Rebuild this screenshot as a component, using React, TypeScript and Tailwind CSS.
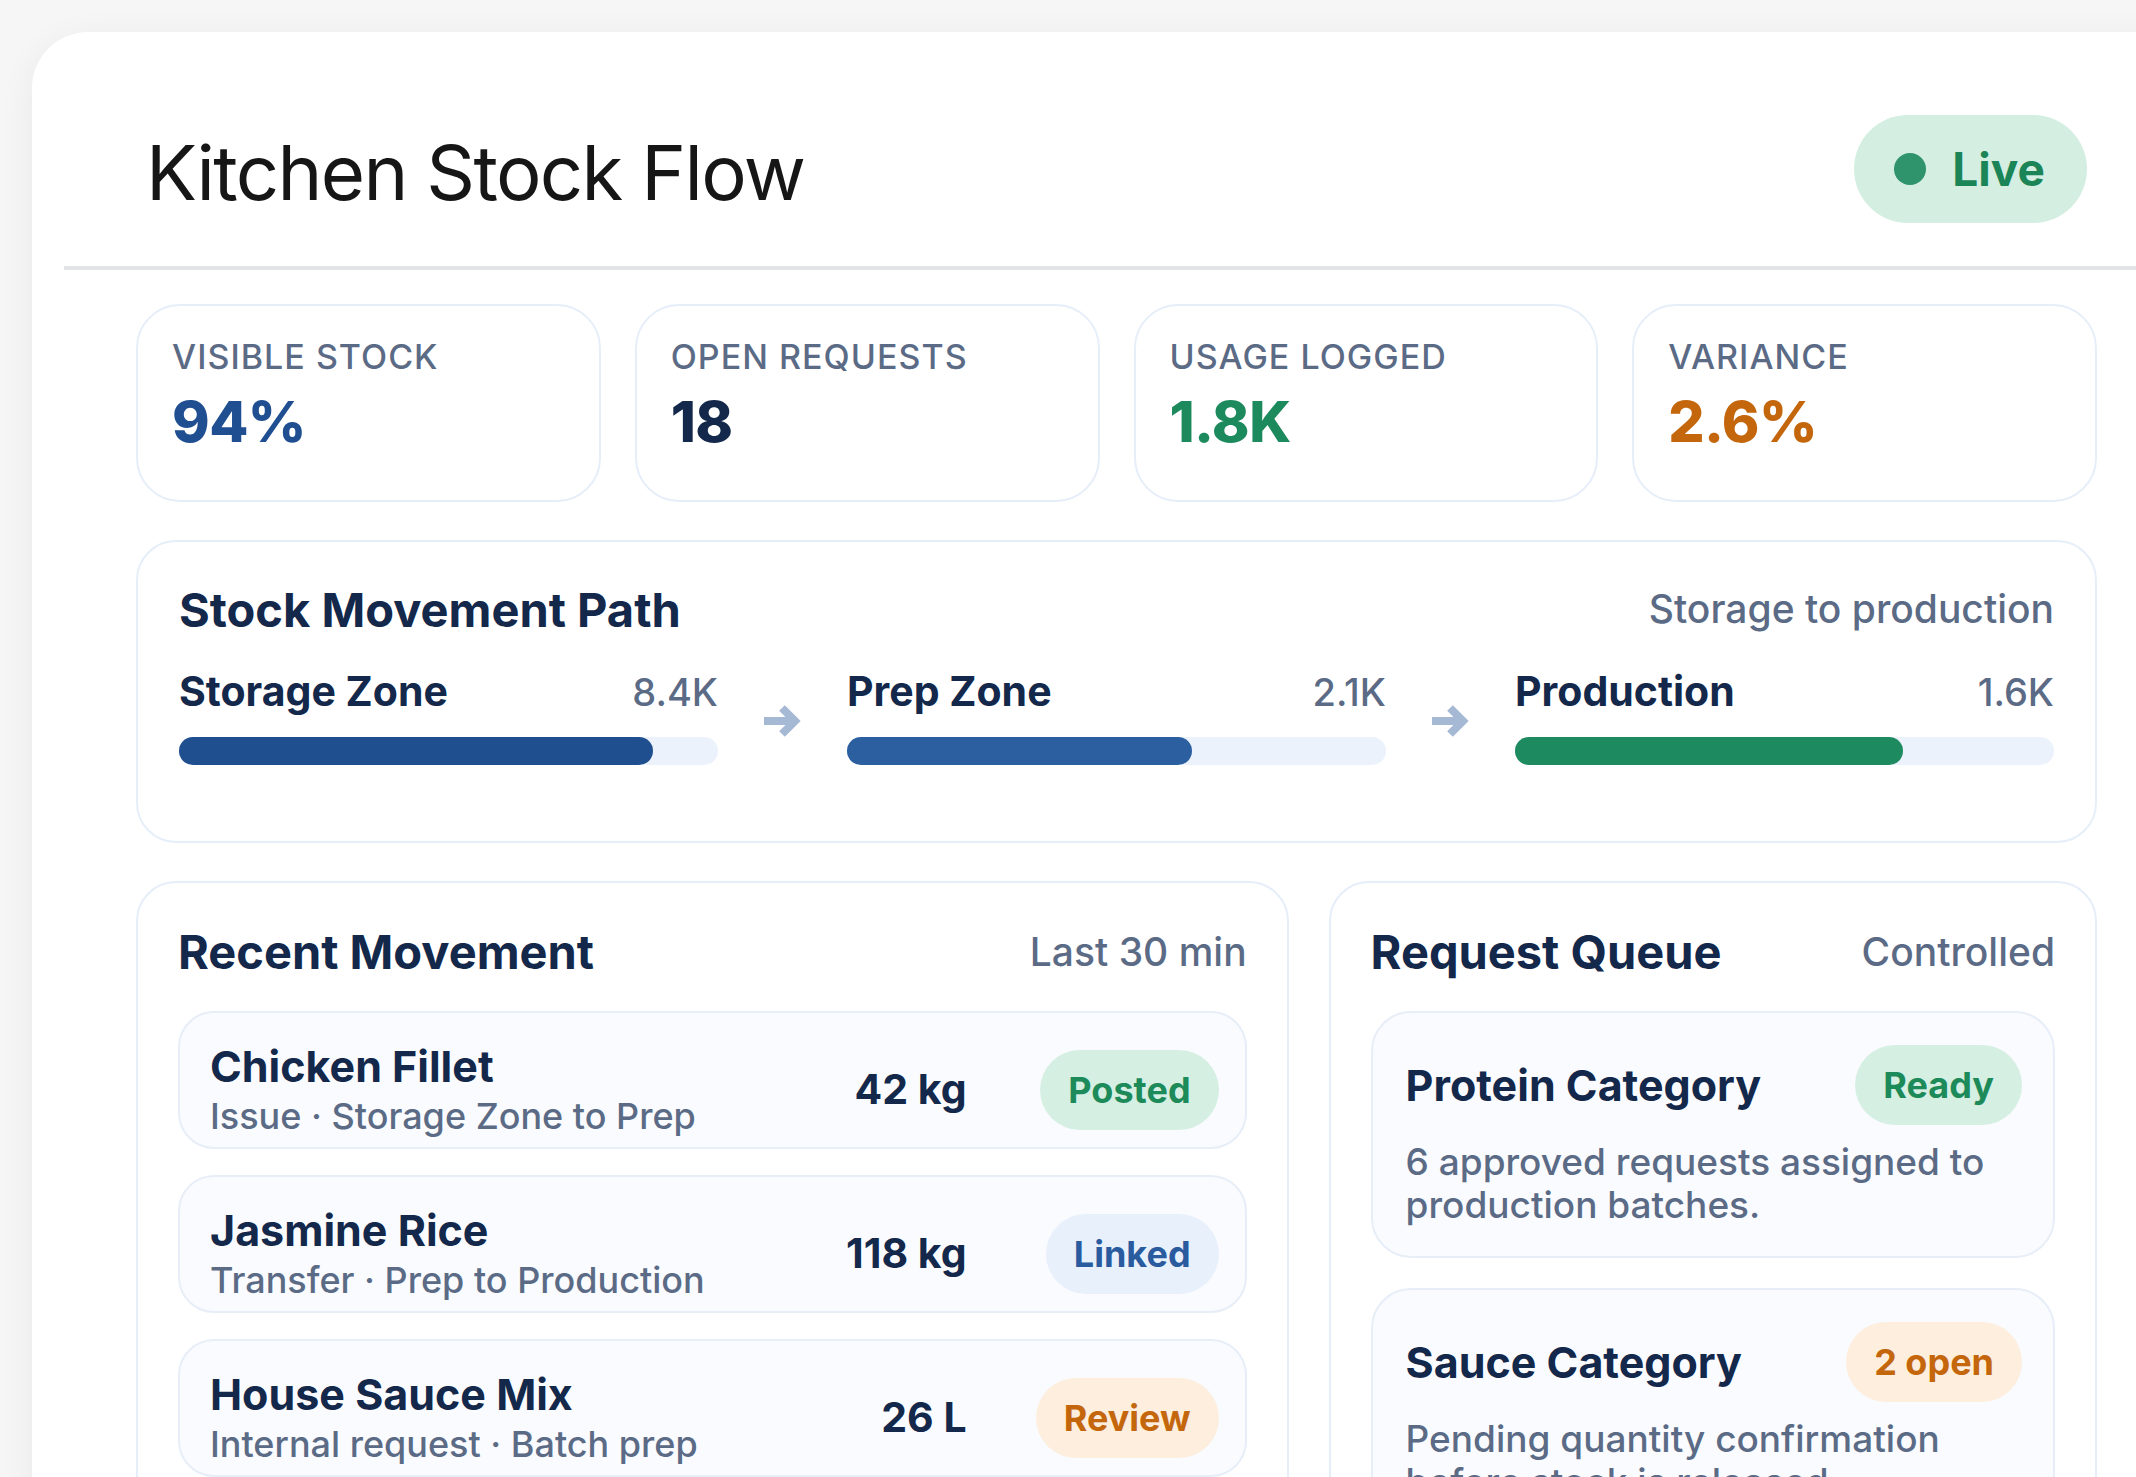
import React from "react";

// ---------------------------------------------------------------------------
// Data
// ---------------------------------------------------------------------------

const STATS = [
  { label: "Visible stock", value: "94%", color: "text-[#1f4e91]" },
  { label: "Open requests", value: "18", color: "text-[#13284a]" },
  { label: "Usage logged", value: "1.8K", color: "text-[#1d8a5e]" },
  { label: "Variance", value: "2.6%", color: "text-[#c4660c]" },
];

const ZONES = [
  { name: "Storage Zone", value: "8.4K", pct: 88, fill: "bg-[#1f4f8f]" },
  { name: "Prep Zone", value: "2.1K", pct: 64, fill: "bg-[#2c5f9f]" },
  { name: "Production", value: "1.6K", pct: 72, fill: "bg-[#1e8a5f]" },
];

type Tone = "green" | "blue" | "orange";

const TONES: Record<Tone, string> = {
  green: "bg-[#d5efe3] text-[#1d8a5a]",
  blue: "bg-[#e8f0fb] text-[#2a5b9e]",
  orange: "bg-[#fdeedd] text-[#c4660c]",
};

const MOVEMENTS: { name: string; detail: string; qty: string; status: string; tone: Tone }[] = [
  { name: "Chicken Fillet", detail: "Issue · Storage Zone to Prep", qty: "42 kg", status: "Posted", tone: "green" },
  { name: "Jasmine Rice", detail: "Transfer · Prep to Production", qty: "118 kg", status: "Linked", tone: "blue" },
  { name: "House Sauce Mix", detail: "Internal request · Batch prep", qty: "26 L", status: "Review", tone: "orange" },
];

const REQUESTS: { name: string; text: string; status: string; tone: Tone }[] = [
  { name: "Protein Category", text: "6 approved requests assigned to production batches.", status: "Ready", tone: "green" },
  { name: "Sauce Category", text: "Pending quantity confirmation before stock is released.", status: "2 open", tone: "orange" },
];

// ---------------------------------------------------------------------------
// Small pieces
// ---------------------------------------------------------------------------

function Pill({ tone, children }: { tone: Tone; children: React.ReactNode }) {
  return (
    <span className={`flex h-[80px] items-center rounded-full px-[28px] text-[36px] font-bold leading-none ${TONES[tone]}`}>
      {children}
    </span>
  );
}

function FlowArrow() {
  return (
    <div className="flex justify-center pt-[14px]">
      <svg width="38" height="34" viewBox="0 0 38 34" fill="none">
        <path d="M0 17H31M18 4L31 17L18 30" stroke="#a6b9d4" strokeWidth="8" strokeLinejoin="miter" />
      </svg>
    </div>
  );
}

function PanelHeader({ title, note }: { title: string; note: string }) {
  return (
    <div className="flex items-center justify-between">
      <h2 className="text-[47px] font-bold leading-[53px] text-[#13284a]">{title}</h2>
      <span className="text-[39px] font-medium text-[#5b6b86]">{note}</span>
    </div>
  );
}

// ---------------------------------------------------------------------------
// Main component
// ---------------------------------------------------------------------------

export default function App() {
  return (
    <div className="h-screen w-screen overflow-hidden bg-[#f6f6f7] p-[32px] font-['Inter',sans-serif]">
      <div className="w-[2169px] rounded-[56px] bg-white p-[32px] shadow-[0_8px_36px_rgba(15,23,42,0.06)]">
        {/* ── Header ─────────────────────────────────────────────────── */}
        <header className="flex items-center justify-between border-b-4 border-[#e2e4e7] px-[82px] pt-[51px] pb-[43px]">
          <h1 className="pt-[6px] text-[76px] font-normal leading-none tracking-[-0.022em] text-[#161616]">
            Kitchen Stock Flow
          </h1>
          <div className="flex h-[108px] items-center gap-[26px] rounded-full bg-[#d4efe2] pl-[40px] pr-[42px]">
            <span className="h-[32px] w-[32px] rounded-full bg-[#2f936c]" />
            <span className="text-[46px] font-bold leading-none text-[#1c8558]">Live</span>
          </div>
        </header>

        <div className="flex flex-col gap-[38px] px-[72px] pt-[34px]">
          {/* ── Stats ───────────────────────────────────────────────── */}
          <div className="grid grid-cols-4 gap-[34px]">
            {STATS.map((s) => (
              <div key={s.label} className="h-[198px] rounded-[44px] border-2 border-[#e6eef9] px-[34px] pt-[31px]">
                <div className="text-[34px] font-medium uppercase leading-[40px] tracking-[0.03em] text-[#5b6b86]">
                  {s.label}
                </div>
                <div className={`mt-[15px] text-[57px] font-extrabold leading-[60px] tracking-[-0.01em] ${s.color}`}>
                  {s.value}
                </div>
              </div>
            ))}
          </div>

          {/* ── Stock movement path ─────────────────────────────────── */}
          <section className="rounded-[40px] border-2 border-[#e6eef9] px-[41px] pt-[38px] pb-[76px]">
            <PanelHeader title="Stock Movement Path" note="Storage to production" />
            <div className="mt-[25px] grid grid-cols-[1fr_129px_1fr_129px_1fr] items-center">
              {ZONES.map((z, i) => (
                <React.Fragment key={z.name}>
                  {i > 0 && <FlowArrow />}
                  <div>
                    <div className="flex items-baseline justify-between">
                      <span className="text-[41px] font-bold leading-[46px] text-[#13284a]">{z.name}</span>
                      <span className="text-[38px] font-medium text-[#5b6b86]">{z.value}</span>
                    </div>
                    <div className="mt-[16px] h-[28px] rounded-full bg-[#ebf2fb]">
                      <div className={`h-full rounded-full ${z.fill}`} style={{ width: `${z.pct}%` }} />
                    </div>
                  </div>
                </React.Fragment>
              ))}
            </div>
          </section>

          {/* ── Lower panels ────────────────────────────────────────── */}
          <div className="grid grid-cols-[3fr_2fr] items-start gap-[40px]">
            <section className="rounded-[40px] border-2 border-[#e6eef9] px-[40px] pt-[40px] pb-[40px]">
              <PanelHeader title="Recent Movement" note="Last 30 min" />
              <div className="mt-[30px] flex flex-col gap-[26px]">
                {MOVEMENTS.map((m) => (
                  <div
                    key={m.name}
                    className="flex h-[138px] items-center rounded-[36px] border-2 border-[#e7eef8] bg-[#f9fbfe] pl-[30px] pr-[26px] pt-[26px] pb-[6px]"
                  >
                    <div className="min-w-0 flex-1">
                      <div className="text-[43px] font-bold leading-[48px] text-[#13284a]">{m.name}</div>
                      <div className="mt-[4px] text-[36px] font-medium leading-[44px] text-[#5b6b86]">{m.detail}</div>
                    </div>
                    <div className="text-[41px] font-bold text-[#13284a]">{m.qty}</div>
                    <div className="ml-[68px] flex w-[184px] justify-end">
                      <Pill tone={m.tone}>{m.status}</Pill>
                    </div>
                  </div>
                ))}
              </div>
            </section>

            <section className="rounded-[40px] border-2 border-[#e6eef9] px-[40px] pt-[40px] pb-[40px]">
              <PanelHeader title="Request Queue" note="Controlled" />
              <div className="mt-[30px] flex flex-col gap-[30px]">
                {REQUESTS.map((r) => (
                  <div key={r.name} className="rounded-[40px] border-2 border-[#e7eef8] bg-[#f9fbfe] pl-[33px] pr-[31px] pt-[32px] pb-[30px]">
                    <div className="flex items-center justify-between">
                      <span className="text-[43px] font-bold text-[#13284a]">{r.name}</span>
                      <Pill tone={r.tone}>{r.status}</Pill>
                    </div>
                    <p className="mt-[15px] text-[37px] font-medium leading-[43px] text-[#5b6b86]">{r.text}</p>
                  </div>
                ))}
              </div>
            </section>
          </div>
        </div>
      </div>
    </div>
  );
}
